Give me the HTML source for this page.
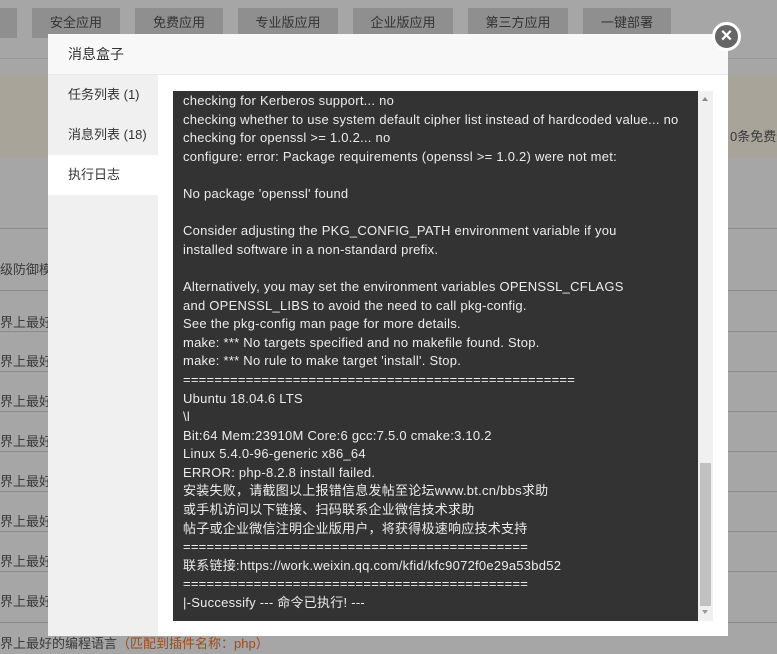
<!DOCTYPE html>
<html><head><meta charset="utf-8"><style>
*{margin:0;padding:0;box-sizing:border-box}
body{width:777px;height:654px;overflow:hidden;background:#a6a6a6;font-family:"Liberation Sans","Noto Sans CJK SC",sans-serif;position:relative}
.tab{position:absolute;top:8px;height:30px;background:#8f8f8f;color:#333;font-size:13px;line-height:30px;text-align:center}
.ln{position:absolute;left:0;width:777px;border-top:1px solid #8a8a8a}
.t{position:absolute;left:0;font-size:13px;color:#3a3a3a;white-space:nowrap}
.modal{position:absolute;left:48px;top:34px;width:680px;height:602px;background:#fff}
.hd{height:41px;background:#f8f8f8;border-bottom:1px solid #e8e8e8;font-size:14px;line-height:41px;padding-left:20px;color:#333}
.side{position:absolute;left:0;top:41px;width:110px;bottom:0;background:#f0f0f0}
.side div{height:40px;line-height:40px;padding-left:20px;font-size:13px;color:#333}
.side .on{background:#fff}
.log{position:absolute;left:125px;top:57px;width:525px;height:530px;background:#333;color:#ececec;font-size:13px;line-height:18.6px;padding:1px 10px 0;white-space:pre;overflow:hidden;letter-spacing:0.25px}
.sb{position:absolute;left:650px;top:57px;width:15px;height:530px;background:#f0f0f0}
.th{position:absolute;left:2px;top:372px;width:11px;height:143px;background:#c1c1c1}
.close{position:absolute;left:712px;top:22px;width:29px;height:29px;border-radius:50%;background:#666;border:3px solid #fff;color:#fff;text-align:center;line-height:22px;font-size:20px;font-weight:bold}
</style></head><body>
<div class="tab" style="left:0;width:17px"></div>
<div class="tab" style="left:32px;width:88px">安全应用</div>
<div class="tab" style="left:135px;width:88px">免费应用</div>
<div class="tab" style="left:238px;width:100px">专业版应用</div>
<div class="tab" style="left:353px;width:100px">企业版应用</div>
<div class="tab" style="left:468px;width:100px">第三方应用</div>
<div class="tab" style="left:583px;width:88px">一键部署</div>
<div class="ln" style="top:58px;border-color:#999"></div>
<div style="position:absolute;left:0;top:75px;width:777px;height:83px;background:#a8a49a"></div>
<div class="t" style="left:730px;top:126px">0条免费短</div>
<div class="ln" style="top:228px"></div>
<div class="t" style="top:259px">级防御模块</div>
<div class="ln" style="top:290px"></div>
<div class="t" style="top:312px">界上最好的</div>
<div class="ln" style="top:331px"></div>
<div class="t" style="top:351px">界上最好的</div>
<div class="ln" style="top:371px"></div>
<div class="t" style="top:391px">界上最好的</div>
<div class="ln" style="top:411px"></div>
<div class="t" style="top:431px">界上最好的</div>
<div class="ln" style="top:451px"></div>
<div class="t" style="top:471px">界上最好的</div>
<div class="ln" style="top:491px"></div>
<div class="t" style="top:511px">界上最好的</div>
<div class="ln" style="top:531px"></div>
<div class="t" style="top:551px">界上最好的</div>
<div class="ln" style="top:571px"></div>
<div class="t" style="top:591px">界上最好的</div>
<div class="ln" style="top:622px"></div>
<div class="t" style="top:633px">界上最好的编程语言<span style="color:#a04a1a">（匹配到插件名称：php）</span></div>
<div class="modal">
<div class="hd">消息盒子</div>
<div class="side"><div>任务列表 (1)</div><div>消息列表 (18)</div><div class="on">执行日志</div></div>
<div class="log">checking for Kerberos support... no
checking whether to use system default cipher list instead of hardcoded value... no
checking for openssl &gt;= 1.0.2... no
configure: error: Package requirements (openssl &gt;= 1.0.2) were not met:

No package 'openssl' found

Consider adjusting the PKG_CONFIG_PATH environment variable if you
installed software in a non-standard prefix.

Alternatively, you may set the environment variables OPENSSL_CFLAGS
and OPENSSL_LIBS to avoid the need to call pkg-config.
See the pkg-config man page for more details.
make: *** No targets specified and no makefile found. Stop.
make: *** No rule to make target 'install'. Stop.
==================================================
Ubuntu 18.04.6 LTS
\l
Bit:64 Mem:23910M Core:6 gcc:7.5.0 cmake:3.10.2
Linux 5.4.0-96-generic x86_64
ERROR: php-8.2.8 install failed.
安装失败，请截图以上报错信息发帖至论坛www.bt.cn/bbs求助
或手机访问以下链接、扫码联系企业微信技术求助
帖子或企业微信注明企业版用户，将获得极速响应技术支持
============================================
联系链接:https://work.weixin.qq.com/kfid/kfc9072f0e29a53bd52
============================================
|-Successify --- 命令已执行! ---</div>
<div class="sb"><div style="position:absolute;left:4px;top:6px;border:3px solid transparent;border-bottom:4px solid #888;border-top:0"></div><div class="th"></div><div style="position:absolute;left:4px;top:519px;border:3px solid transparent;border-top:4px solid #999;border-bottom:0"></div></div>
</div>
<div class="close">×</div>
</body></html>
